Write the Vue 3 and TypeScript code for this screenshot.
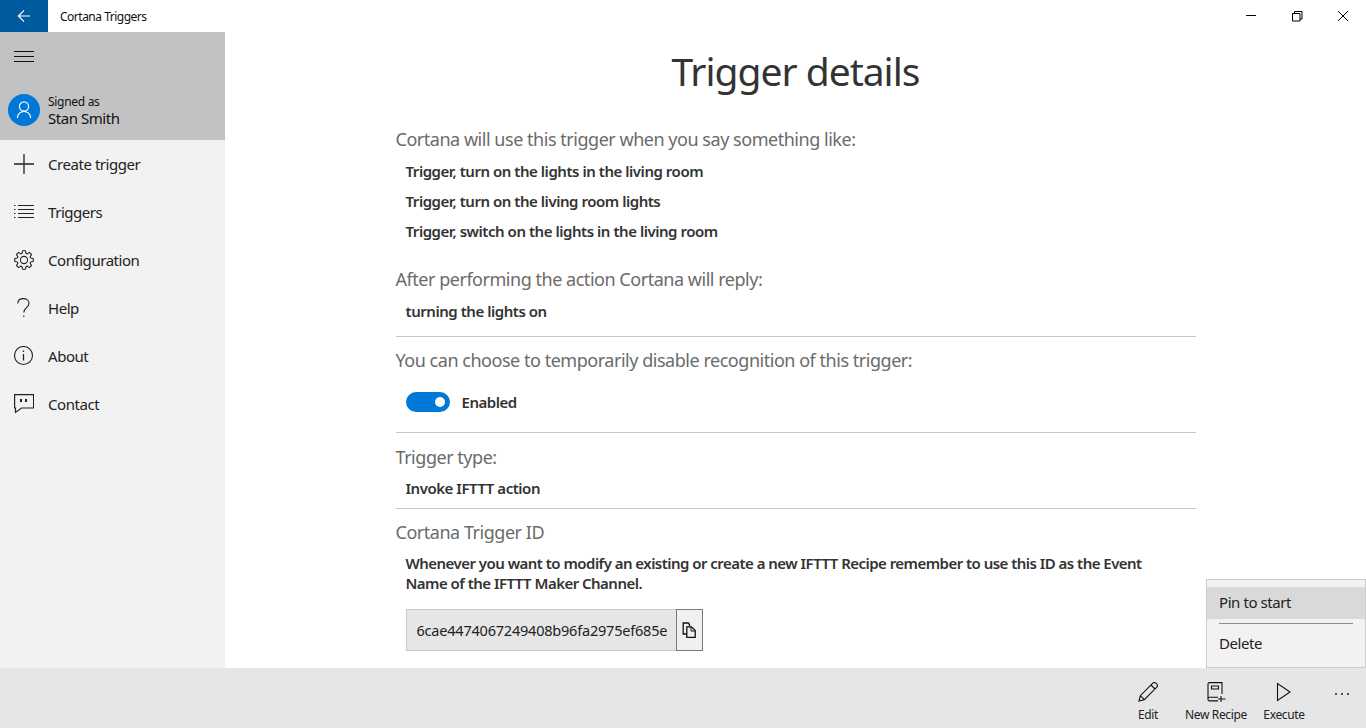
<script setup lang="ts">
const navItems = [
  { label: 'Create trigger', icon: 'plus' },
  { label: 'Triggers', icon: 'list' },
  { label: 'Configuration', icon: 'gear' },
  { label: 'Help', icon: 'help' },
  { label: 'About', icon: 'info' },
  { label: 'Contact', icon: 'chat' },
]

const phrases = [
  'Trigger, turn on the lights in the living room',
  'Trigger, turn on the living room lights',
  'Trigger, switch on the lights in the living room',
]

// gear outline: 8 teeth around the centre of a 20x20 box
const gearPath = (() => {
  const pts: string[] = []
  for (let i = 0; i < 8; i++) {
    const a = (i * Math.PI) / 4 - Math.PI / 2
    const step = Math.PI / 8
    const at = (r: number, t: number) =>
      `${(10 + r * Math.cos(t)).toFixed(2)} ${(10 + r * Math.sin(t)).toFixed(2)}`
    pts.push(`${i === 0 ? 'M' : 'L'}${at(9.4, a - step * 0.42)}`)
    pts.push(`L${at(9.4, a + step * 0.42)}`)
    pts.push(`L${at(7, a + step * 0.72)}`)
    pts.push(`L${at(7, a + step * 1.28)}`)
  }
  return pts.join(' ') + ' Z'
})()
</script>

<template>
  <div class="app">
    <header class="titlebar">
      <button class="back" aria-label="Back">
        <svg width="16" height="16" viewBox="0 0 16 16" fill="none" stroke="#fff" stroke-width="1.2">
          <path d="M14 8H2.5M8 2.4 2.4 8 8 13.6" />
        </svg>
      </button>
      <span class="app-title">Cortana Triggers</span>
      <div class="win-controls">
        <svg width="46" height="32" viewBox="0 0 46 32" fill="none" stroke="#000">
          <path d="M18 15.5h10" />
        </svg>
        <svg width="46" height="32" viewBox="0 0 46 32" fill="none" stroke="#000">
          <path d="M18.5 13.5h7.500v7.500h-7.500z M20.500 13.500v-2h7.500v7.500h-2" />
        </svg>
        <svg width="46" height="32" viewBox="0 0 46 32" fill="none" stroke="#000">
          <path d="M18 11l10 10M28 11 18 21" />
        </svg>
      </div>
    </header>

    <div class="middle">
      <aside class="sidebar">
        <div class="profile">
          <button class="burger" aria-label="Menu"><i></i><i></i><i></i></button>
          <div class="user">
            <span class="avatar">
              <svg width="20" height="20" viewBox="0 0 20 20" fill="none" stroke="#fff" stroke-width="1.200">
                <circle cx="10" cy="6.500" r="4.600" />
                <path d="M3.300 18c0-3.800 2.800-6.500 6.700-6.500s6.700 2.700 6.700 6.500" />
              </svg>
            </span>
            <div class="user-text">
              <span class="signed">Signed as</span>
              <span class="name">Stan Smith</span>
            </div>
          </div>
        </div>
        <nav class="nav">
          <a v-for="item in navItems" :key="item.label" class="nav-item">
            <svg class="nav-icon" width="20" height="20" viewBox="0 0 20 20" fill="none" stroke="#222" stroke-width="1.100">
              <path v-if="item.icon === 'plus'" stroke-width="1.300" d="M0 10h20M10 0v20" />
              <path
                v-else-if="item.icon === 'list'"
                d="M4 3.500h16M4 7.500h16M4 11.500h16M4 15.500h16M0 3.500h1.500M0 7.500h1.500M0 11.500h1.500M0 15.500h1.500"
              />
              <template v-else-if="item.icon === 'gear'">
                <path :d="gearPath" stroke-linejoin="round" />
                <circle cx="10" cy="10" r="3.600" />
              </template>
              <template v-else-if="item.icon === 'help'">
                <path d="M3.800 5.500C3.800 2.500 6.200 .6 9.500 .6c3 0 5.500 1.900 5.500 4.700 0 4.300-5.200 4.500-5.200 9.200" />
                <path d="M9.800 17.500v1.500" />
              </template>
              <template v-else-if="item.icon === 'info'">
                <circle cx="9.500" cy="9.500" r="9" />
                <path d="M9.500 8v6.500M9.500 4.500v1.500" stroke-width="1.300" />
              </template>
              <template v-else>
                <path d="M.6 .6h19V14H7.500L1.500 18.400V14H.6z" stroke-width="1.200" />
                <path d="M7 5v3M12 5v3" stroke-width="2" />
              </template>
            </svg>
            <span>{{ item.label }}</span>
          </a>
        </nav>
      </aside>

      <main class="content">
        <div class="column">
          <h1>Trigger details</h1>

          <section class="block first">
            <h2>Cortana will use this trigger when you say something like:</h2>
            <p v-for="phrase in phrases" :key="phrase" class="phrase">{{ phrase }}</p>
          </section>

          <section class="block ruled reply">
            <h2>After performing the action Cortana will reply:</h2>
            <p class="phrase">turning the lights on</p>
          </section>

          <section class="block ruled toggle-block">
            <h2>You can choose to temporarily disable recognition of this trigger:</h2>
            <div class="toggle-row">
              <span class="toggle"><i></i></span>
              <span class="strong">Enabled</span>
            </div>
          </section>

          <section class="block ruled type-block">
            <h2>Trigger type:</h2>
            <p class="phrase">Invoke IFTTT action</p>
          </section>

          <section class="block id-block">
            <h2>Cortana Trigger ID</h2>
            <p class="note">
              Whenever you want to modify an existing or create a new IFTTT Recipe remember to use this ID as the Event
              Name of the IFTTT Maker Channel.
            </p>
            <div class="id-row">
              <span class="id-value">6cae4474067249408b96fa2975ef685e</span>
              <button class="copy" aria-label="Copy">
                <svg width="14" height="16" viewBox="0 0 14 16" fill="none" stroke="#111" stroke-width="1.300">
                  <path d="M4.500 12H1.200V1h5l1.300 1.500V4.500" />
                  <path d="M4.800 4.800h4.700l3.700 3.700v6.800H4.800z" />
                  <path d="M9 5v4h4" stroke-width="1" />
                </svg>
              </button>
            </div>
          </section>
        </div>
      </main>
    </div>

    <footer class="commandbar">
      <button class="cmd">
        <svg width="20" height="20" viewBox="0 0 20 20" fill="none" stroke="#111" stroke-width="1.100">
          <path d="M1 19l1.300-5.300L14.800 1.200a2.200 2.200 0 0 1 3 0l1 1a2.200 2.200 0 0 1 0 3L6.300 17.700zM2.300 13.700l4 4M13 3l4 4" />
        </svg>
        <span>Edit</span>
      </button>
      <button class="cmd">
        <svg width="20" height="20" viewBox="0 0 20 20" fill="none" stroke="#111" stroke-width="1.100">
          <path d="M16 12V.6H3.500A1.500 1.500 0 0 0 2 2.100V17.400c0 .9.700 1.500 1.500 1.500H12M2 17c0-1 .7-1.700 1.500-1.700H12M5.500 4h7v3h-7zM15 14v6M12 17h7.500" />
        </svg>
        <span>New Recipe</span>
      </button>
      <button class="cmd">
        <svg width="20" height="20" viewBox="0 0 20 20" fill="none" stroke="#111" stroke-width="1.100">
          <path d="M3.500 1.500v17L16 10z" />
        </svg>
        <span>Execute</span>
      </button>
      <button class="more" aria-label="More">
        <i></i><i></i><i></i>
      </button>

      <div class="flyout">
        <div class="flyout-item active">Pin to start</div>
        <div class="flyout-sep"></div>
        <div class="flyout-item">Delete</div>
      </div>
    </footer>
  </div>
</template>

<style>
html,
body {
  margin: 0;
  height: 100%;
  overflow: hidden;
}
</style>

<style scoped>
.app {
  display: flex;
  flex-direction: column;
  width: 1366px;
  height: 728px;
  background: #fff;
  color: #222;
  font-family: 'Noto Sans', 'Open Sans', sans-serif;
  font-size: 15px;
  overflow: hidden;
}

button {
  border: 0;
  padding: 0;
  background: none;
  font: inherit;
  color: inherit;
}

.titlebar {
  display: flex;
  align-items: center;
  flex: none;
  height: 32px;
}

.back {
  display: flex;
  align-items: center;
  justify-content: center;
  width: 48px;
  height: 32px;
  background: #005a9e;
}

.app-title {
  margin-left: 12px;
  font-size: 12px;
  letter-spacing: -0.5px;
  color: #111;
}

.win-controls {
  display: flex;
  margin-left: auto;
}

.middle {
  display: flex;
  flex: 1;
  min-height: 0;
}

.sidebar {
  flex: none;
  width: 225px;
  background: #f2f2f2;
}

.profile {
  height: 108px;
  background: #c2c2c2;
}

.burger {
  display: flex;
  flex-direction: column;
  justify-content: center;
  gap: 4px;
  width: 48px;
  height: 48px;
  padding: 0 14px;
}

.burger i {
  display: block;
  height: 1px;
  background: #111;
}

.user {
  display: flex;
  align-items: center;
  gap: 8px;
  padding: 12px 0 0 8px;
}

.avatar {
  display: flex;
  align-items: center;
  justify-content: center;
  width: 32px;
  height: 32px;
  border-radius: 50%;
  background: #0078d7;
}

.user-text {
  display: flex;
  flex-direction: column;
  margin-top: 2px;
  color: #111;
}

.signed {
  font-size: 12px;
  line-height: 15px;
  letter-spacing: -0.3px;
}

.name {
  font-size: 15px;
  line-height: 19px;
  letter-spacing: -0.45px;
}

.nav-item {
  display: flex;
  align-items: center;
  gap: 14px;
  height: 48px;
  padding-left: 14px;
  letter-spacing: -0.45px;
  color: #222;
}

.nav-icon {
  flex: none;
}

.content {
  position: relative;
  flex: 1;
  min-width: 0;
  display: flex;
  justify-content: center;
  overflow: hidden;
}

.column {
  width: 800px;
}

h1 {
  margin: 12px 0 0;
  font-size: 39px;
  font-weight: 400;
  line-height: 54px;
  letter-spacing: -1px;
  text-align: center;
  color: #333;
}

h2 {
  margin: 0;
  font-size: 18px;
  font-weight: 400;
  line-height: 24px;
  letter-spacing: -0.47px;
  color: #6b6b6b;
}

.block.first {
  margin-top: 29px;
}

.phrase {
  margin: 0;
  padding-left: 10px;
  font-size: 15px;
  font-weight: 600;
  line-height: 30px;
  letter-spacing: -0.46px;
  color: #333;
}

.first h2 {
  margin-bottom: 5px;
}

.reply {
  margin-top: 21px;
  height: 69px;
}

.ruled {
  border-bottom: 1px solid #c8c8c8;
}

.reply h2 {
  margin-bottom: 5px;
}

.toggle-block {
  height: 96px;
  padding-top: 11px;
  box-sizing: border-box;
}

.toggle-row {
  display: flex;
  align-items: center;
  gap: 12px;
  height: 20px;
  margin: 20px 0 0 10px;
}

.toggle {
  display: flex;
  align-items: center;
  justify-content: flex-end;
  width: 44px;
  height: 20px;
  padding-right: 5px;
  box-sizing: border-box;
  border-radius: 10px;
  background: #0078d7;
}

.toggle i {
  display: block;
  width: 10px;
  height: 10px;
  border-radius: 50%;
  background: #fff;
}

.strong {
  font-weight: 600;
  letter-spacing: -0.46px;
  color: #333;
}

.type-block {
  height: 76px;
  padding-top: 12px;
  box-sizing: border-box;
}

.type-block h2 {
  margin-bottom: 4px;
}

.id-block {
  padding-top: 11px;
}

.note {
  width: 745px;
  margin: 9px 0 0;
  padding-left: 10px;
  font-size: 15px;
  font-weight: 600;
  line-height: 20px;
  letter-spacing: -0.53px;
  color: #333;
}

.id-row {
  display: flex;
  height: 42px;
  margin: 16px 0 0 10px;
}

.id-value {
  display: flex;
  align-items: center;
  width: 270px;
  padding-left: 10px;
  box-sizing: border-box;
  border: 1px solid #c8c8c8;
  border-right: 0;
  background: #e6e6e6;
  font-size: 14.5px;
  letter-spacing: -0.21px;
  white-space: nowrap;
}

.copy {
  display: flex;
  align-items: center;
  justify-content: center;
  width: 27px;
  border: 1px solid #7a7a7a;
  background: #f0f0f0;
}

.commandbar {
  position: relative;
  display: flex;
  align-items: flex-start;
  justify-content: flex-end;
  flex: none;
  height: 60px;
  background: #e6e6e6;
}

.cmd {
  display: flex;
  flex-direction: column;
  align-items: center;
  gap: 5px;
  width: 68px;
  padding-top: 14px;
  font-size: 12px;
  line-height: 16px;
  letter-spacing: -0.35px;
  color: #222;
}

.more {
  display: flex;
  justify-content: center;
  gap: 4px;
  width: 48px;
  padding-top: 25px;
}

.more i {
  display: block;
  width: 2px;
  height: 2px;
  border-radius: 50%;
  background: #222;
}

/* overflow menu opened above the command bar */
.flyout {
  position: absolute;
  right: 0;
  bottom: 60px;
  width: 160px;
  height: 89px;
  padding-top: 7px;
  box-sizing: border-box;
  border: 1px solid #ccc;
  background: #f2f2f2;
  color: #222;
  letter-spacing: -0.42px;
}

.flyout-item {
  display: flex;
  align-items: center;
  height: 32px;
  padding: 0 0 2px 12px;
  box-sizing: border-box;
}

.flyout-item.active {
  background: #d9d9d9;
}

.flyout-sep {
  height: 1px;
  margin: 4px 12px;
  background: #8c8c8c;
}
</style>
